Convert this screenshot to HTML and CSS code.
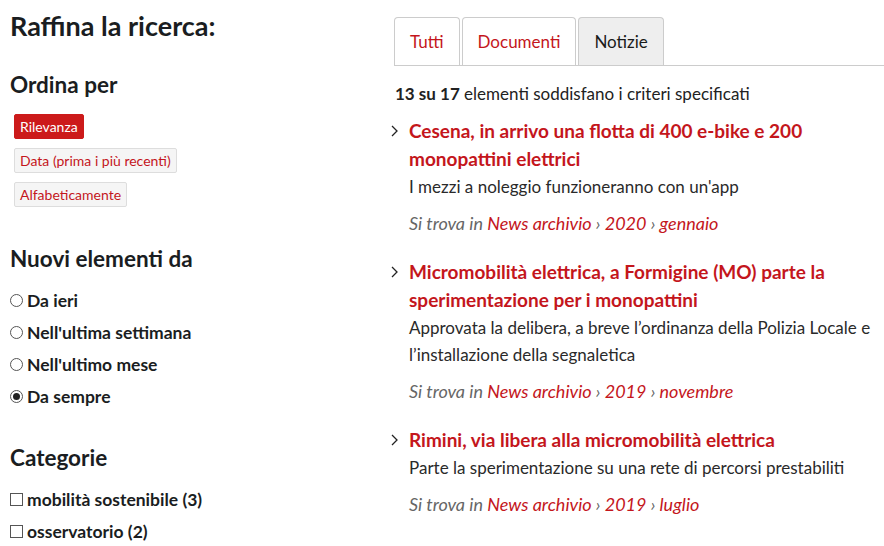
FILE: index.html
```html
<!DOCTYPE html>
<html lang="it">
<head>
<meta charset="utf-8">
<title>Ricerca</title>
<link rel="stylesheet" href="styles.css">
</head>
<body>
<div class="page">
  <aside class="side">
    <h1 class="side-title">Raffina la ricerca:</h1>
    <h2 class="side-h">Ordina per</h2>
    <div class="sort">
      <a class="sort-btn active">Rilevanza</a>
      <a class="sort-btn">Data (prima i più recenti)</a>
      <a class="sort-btn">Alfabeticamente</a>
    </div>
    <h2 class="side-h h-new">Nuovi elementi da</h2>
    <ul class="opts">
      <li><span class="radio"></span>Da ieri</li>
      <li><span class="radio"></span>Nell'ultima settimana</li>
      <li><span class="radio"></span>Nell'ultimo mese</li>
      <li><span class="radio on"></span>Da sempre</li>
    </ul>
    <h2 class="side-h h-cat">Categorie</h2>
    <ul class="opts">
      <li><span class="check"></span>mobilità sostenibile (3)</li>
      <li><span class="check"></span>osservatorio (2)</li>
    </ul>
  </aside>
  <main class="main">
    <nav class="tabs">
      <a class="tab">Tutti</a>
      <a class="tab">Documenti</a>
      <a class="tab current">Notizie</a>
    </nav>
    <p class="count"><b>13 su 17</b> elementi soddisfano i criteri specificati</p>
    <ul class="results">
      <li class="item">
        <span class="chev"><svg width="10" height="12" viewBox="0 0 10 12"><path d="M2 1 L7 6 L2 11" fill="none" stroke="#222" stroke-width="1.3"/></svg></span>
        <div class="body">
          <a class="title">Cesena, in arrivo una flotta di 400 e-bike e 200 monopattini elettrici</a>
          <p class="desc">I mezzi a noleggio funzioneranno con un'app</p>
          <p class="where">Si trova in <a>News archivio</a> › <a>2020</a> › <a>gennaio</a></p>
        </div>
      </li>
      <li class="item">
        <span class="chev"><svg width="10" height="12" viewBox="0 0 10 12"><path d="M2 1 L7 6 L2 11" fill="none" stroke="#222" stroke-width="1.3"/></svg></span>
        <div class="body">
          <a class="title">Micromobilità elettrica, a Formigine (MO) parte la sperimentazione per i monopattini</a>
          <p class="desc">Approvata la delibera, a breve l’ordinanza della Polizia Locale e l’installazione della segnaletica</p>
          <p class="where">Si trova in <a>News archivio</a> › <a>2019</a> › <a>novembre</a></p>
        </div>
      </li>
      <li class="item">
        <span class="chev"><svg width="10" height="12" viewBox="0 0 10 12"><path d="M2 1 L7 6 L2 11" fill="none" stroke="#222" stroke-width="1.3"/></svg></span>
        <div class="body">
          <a class="title">Rimini, via libera alla micromobilità elettrica</a>
          <p class="desc">Parte la sperimentazione su una rete di percorsi prestabiliti</p>
          <p class="where">Si trova in <a>News archivio</a> › <a>2019</a> › <a>luglio</a></p>
        </div>
      </li>
    </ul>
  </main>
</div>
</body>
</html>
```
FILE: styles.css
```css
* { box-sizing: border-box; }
html, body { margin: 0; padding: 0; background: #fff; }
body {
  font-family: "Lato", "Noto Sans", sans-serif;
  color: #1c1c1c;
  width: 884px;
  height: 546px;
  overflow: hidden;
}
.page {
  display: flex;
  padding-left: 10px;
}
.side { width: 384px; flex: none; }
.side-title {
  margin: 9px 0 0;
  font-size: 27px;
  line-height: 34px;
  font-weight: 700;
  color: #1a1d21;
}
.side-h {
  margin: 27px 0 0;
  font-size: 22.5px;
  line-height: 30px;
  font-weight: 700;
  color: #1a1d21;
}
.sort { display: flex; flex-direction: column; align-items: flex-start; gap: 9px; margin-top: 14px; margin-left: 4px; }
.sort-btn {
  display: block;
  font-size: 14px;
  line-height: 23px;
  padding: 0 5px;
  border: 1px solid #ddd;
  border-radius: 2px;
  background: #f5f5f5;
  color: #c4161c;
}
.sort-btn.active { background: #cc1a1a; border-color: #cc1a1a; color: #fff; }
.h-new { margin-top: 37px; }
.h-cat { margin-top: 31px; }
.opts { list-style: none; margin: 10px 0 0; padding: 0; }
.opts li {
  display: flex;
  align-items: center;
  height: 32px;
  font-size: 17.5px;
  font-weight: 700;
  color: #1a1d21;
}
.radio {
  width: 13px; height: 13px;
  border: 1px solid #555;
  border-radius: 50%;
  margin-right: 4px;
  display: inline-flex;
  align-items: center;
  justify-content: center;
}
.radio.on::after {
  content: "";
  width: 7px; height: 7px;
  border-radius: 50%;
  background: #222;
}
.check {
  width: 13px; height: 13px;
  border: 1px solid #555;
  margin-right: 4px;
}
.main { flex: 1; }
.tabs {
  display: flex;
  gap: 2px;
  margin-top: 17px;
  border-bottom: 1px solid #ccc;
  padding-left: 0;
}
.tab {
  display: block;
  height: 48px;
  line-height: 48px;
  padding: 0 15px;
  font-size: 17px;
  color: #c4161c;
  border: 1px solid #ccc;
  border-bottom: none;
  border-radius: 4px 4px 0 0;
}
.tab.current { background: #eee; color: #1a1a1a; }
.count {
  margin: 17px 0 0 1px;
  font-size: 17px;
  line-height: 22px;
  color: #222;
}
.count b { font-weight: 700; }
.results { list-style: none; margin: 12px 0 0; padding: 0; }
.item { display: flex; margin-bottom: 21px; }
.chev { width: 19px; flex: none; padding-top: 4px; margin-left: -4px; }
.body { flex: 1; }
.title {
  display: block;
  font-size: 19px;
  line-height: 28px;
  font-weight: 700;
  color: #c4161c;
}
.desc { margin: 0; font-size: 17px; line-height: 27px; color: #2a2a2a; }
.where { margin: 10px 0 0; font-size: 18px; line-height: 27px; font-style: italic; color: #666; }
.where a { color: #c4161c; }
```
